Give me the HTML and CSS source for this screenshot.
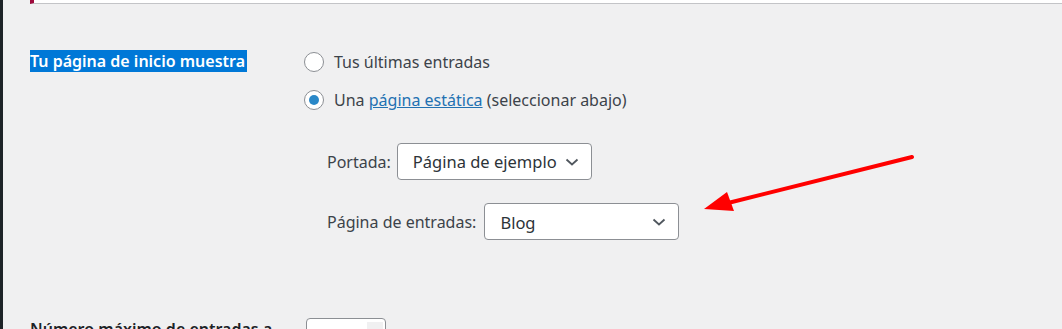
FILE: index.html
```html
<!DOCTYPE html>
<html lang="es">
<head>
<meta charset="utf-8">
<title>Ajustes de lectura</title>
<link rel="stylesheet" href="styles.css">
</head>
<body>
<div class="edge"></div>
<div class="wrap">
  <div class="notice"></div>
  <div class="form-table">
    <div class="row row-front">
      <div class="th"><span class="selected">Tu página de inicio muestra</span></div>
      <div class="td">
        <label class="radio-line"><span class="radio"></span>Tus últimas entradas</label>
        <label class="radio-line"><span class="radio checked"></span>Una&nbsp;<a href="#">página estática</a>&nbsp;(seleccionar abajo)</label>
        <div class="sub">
          <div class="sub-line">
            <span class="sub-label">Portada:</span>
            <span class="select sel-front">Página de ejemplo<svg class="chev" width="14" height="8" viewBox="0 0 14 8"><polyline points="1.5,1.5 7,6.5 12.5,1.5" fill="none" stroke="#50575e" stroke-width="1.8"/></svg></span>
          </div>
          <div class="sub-line">
            <span class="sub-label wide">Página de entradas:</span>
            <span class="select sel-posts">Blog<svg class="chev" width="14" height="8" viewBox="0 0 14 8"><polyline points="1.5,1.5 7,6.5 12.5,1.5" fill="none" stroke="#50575e" stroke-width="1.8"/></svg></span>
          </div>
        </div>
      </div>
    </div>
    <div class="row row-num">
      <div class="th">Número máximo de entradas a</div>
      <div class="td"><span class="number"><span class="spin"></span></span></div>
    </div>
  </div>
  <svg class="arrow" width="220" height="70" viewBox="0 0 220 70">
    <line x1="212" y1="10" x2="24" y2="57" stroke="#ff0000" stroke-width="4" stroke-linecap="round"/>
    <polygon points="4,62 27,45 34,64" fill="#ff0000"/>
  </svg>
</div>
</body>
</html>
```

FILE: styles.css
```css
html, body {
  margin: 0;
  padding: 0;
  height: 100%;
  overflow: hidden;
}
body {
  background: #f0f0f1;
  display: flex;
  font-family: "Noto Sans", "Open Sans", sans-serif;
  font-size: 16px;
  color: #3c434a;
}
.edge {
  width: 3px;
  background: #1d2327;
  flex: none;
}
.wrap {
  flex: 1;
  padding-left: 27px;
  position: relative;
}
.notice {
  height: 3px;
  background: #fff;
  border-left: 4px solid #9e0a3c;
  border-bottom: 1px solid #c3c4c7;
}
.form-table {
  margin-top: 45px;
}
.row {
  display: grid;
  grid-template-columns: 274px 1fr;
}
.th {
  font-weight: 600;
  color: #1d2327;
  line-height: 23px;
}
.row-front .th {
  padding-top: 1px;
}
.selected {
  background: #0078d7;
  color: #fff;
  padding-right: 2px;
}
.td {
  display: flex;
  flex-direction: column;
}
.radio-line {
  display: flex;
  align-items: center;
  height: 24px;
  margin-top: 1px;
  margin-bottom: 13px;
}
.radio {
  width: 18px;
  height: 18px;
  border: 1px solid #8c8f94;
  border-radius: 50%;
  background: #fff;
  margin-right: 10px;
  box-sizing: content-box;
  display: flex;
  align-items: center;
  justify-content: center;
}
.radio.checked::after {
  content: "";
  width: 10px;
  height: 10px;
  border-radius: 50%;
  background: #2a88c8;
}
a {
  color: #2271b1;
  text-decoration: underline;
}
.sub {
  padding-left: 23px;
  padding-top: 18px;
}
.sub-line {
  display: flex;
  align-items: center;
  margin-bottom: 23px;
}
.sub-label {
  margin-right: 6px;
}
.sub-label.wide {
  margin-right: 8px;
}
.select {
  display: flex;
  align-items: center;
  justify-content: space-between;
  box-sizing: border-box;
  height: 37px;
  width: 195px;
  padding: 0 12px 0 15px;
  border: 1px solid #8c8f94;
  border-radius: 4px;
  background: #fff;
  color: #2c3338;
  font-size: 16.5px;
}
.sel-posts {
  padding-top: 1px;
}
.row-num {
  margin-top: 55px;
}
.row-num .th {
  line-height: 23px;
}
.number {
  display: block;
  width: 80px;
  height: 30px;
  box-sizing: border-box;
  border: 1px solid #8c8f94;
  border-radius: 4px;
  background: #fff;
  position: relative;
  margin-left: 2px;
}
.spin {
  position: absolute;
  right: 2px;
  top: 3px;
  width: 16px;
  height: 20px;
  background: #f0f0f1;
}
.arrow {
  position: absolute;
  left: 697px;
  top: 147px;
}
```
